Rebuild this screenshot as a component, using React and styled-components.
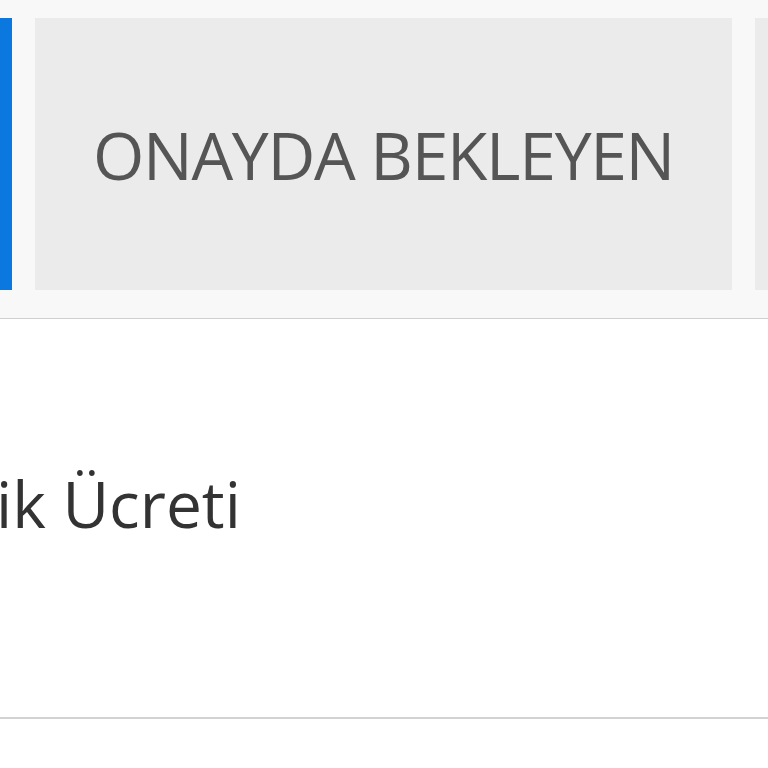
import styled, { createGlobalStyle } from "styled-components";

const GlobalStyle = createGlobalStyle`
  html, body {
    margin: 0;
    padding: 0;
    background: #ffffff;
    font-family: "Open Sans", "Noto Sans", sans-serif;
    overflow: hidden;
  }
`;

const Page = styled.div`
  width: 768px;
  height: 768px;
  overflow: hidden;
  display: flex;
  flex-direction: column;
`;

const TabStrip = styled.div`
  background: #f8f8f8;
  padding: 18px 0 28px;
  border-bottom: 1px solid #cfcfcf;
  overflow: hidden;
`;

const TabRow = styled.div`
  display: flex;
  gap: 23px;
  margin-left: -685px;
`;

const Tab = styled.div`
  flex: 0 0 697px;
  height: 272px;
  display: flex;
  align-items: center;
  justify-content: center;
  overflow: hidden;
  background: ${(p) => (p.$active ? "#0a78de" : "#ebebeb")};
  color: ${(p) => (p.$active ? "#ffffff" : "#555555")};
  font-size: 66px;
  font-weight: 400;
  white-space: nowrap;
  letter-spacing: -1.3px;
`;

const Row = styled.div`
  height: 398px;
  display: flex;
  align-items: center;
  border-bottom: 2px solid #d2d2d2;
  background: #ffffff;
`;

const Label = styled.span`
  margin-left: -4px;
  margin-top: -30px;
  font-size: 64px;
  color: #333333;
  white-space: nowrap;
`;

const App = () => {
  return (
    <Page>
      <GlobalStyle />
      <TabStrip>
        <TabRow>
          <Tab $active />
          <Tab>ONAYDA BEKLEYEN</Tab>
          <Tab />
        </TabRow>
      </TabStrip>
      <Row>
        <Label>ik Ücreti</Label>
      </Row>
    </Page>
  );
};

export default App;
